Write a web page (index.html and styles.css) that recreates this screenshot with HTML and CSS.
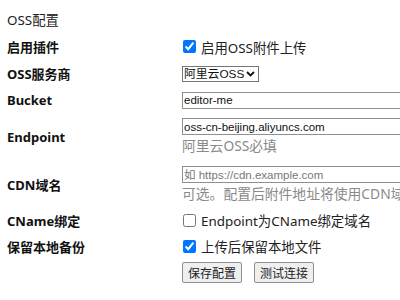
FILE: index.html
```html
<!DOCTYPE html>
<html lang="zh-CN">
<head>
<meta charset="utf-8">
<link rel="stylesheet" href="styles.css">
</head>
<body>
<div class="page">
  <div class="title">OSS配置</div>
  <div class="form">
    <div class="label">启用插件</div>
    <div class="ctl"><label class="chk"><input type="checkbox" checked> 启用OSS附件上传</label></div>

    <div class="label">OSS服务商</div>
    <div class="ctl"><span class="selwrap"><select class="sel"><option>阿里云OSS</option></select><svg class="chev" width="9" height="6" viewBox="0 0 9 6"><path d="M1 1 L4.5 4.5 L8 1" fill="none" stroke="#111" stroke-width="1.8"/></svg></span></div>

    <div class="label">Bucket</div>
    <div class="ctl"><input class="txt" type="text" value="editor-me"></div>

    <div class="label">Endpoint</div>
    <div class="ctl stack"><input class="txt" type="text" value="oss-cn-beijing.aliyuncs.com"><div class="hint">阿里云OSS必填</div></div>

    <div class="label">CDN域名</div>
    <div class="ctl stack"><input class="txt" type="text" placeholder="如 https://cdn.example.com"><div class="hint">可选。配置后附件地址将使用CDN域名</div></div>

    <div class="label">CName绑定</div>
    <div class="ctl"><label class="chk"><input type="checkbox"> Endpoint为CName绑定域名</label></div>

    <div class="label">保留本地备份</div>
    <div class="ctl"><label class="chk"><input type="checkbox" checked> 上传后保留本地文件</label></div>

    <div class="label"></div>
    <div class="ctl btns"><button class="btn">保存配置</button><button class="btn">测试连接</button></div>
  </div>
</div>
</body>
</html>
```
FILE: styles.css
```css
html, body {
  margin: 0;
  padding: 0;
  background: #fff;
  overflow: hidden;
}
.page {
  padding: 10px 0 0 7px;
  font-family: "Noto Sans", "Noto Sans CJK SC", sans-serif;
  font-size: 13.4px;
  color: #222;
  white-space: nowrap;
}
.title {
  height: 20px;
  line-height: 20px;
}
.form {
  display: grid;
  grid-template-columns: 175px 300px;
  grid-template-rows: 27px 27px 26px 48px 46px 26px 26px 26px;
  margin-top: 3px;
  align-items: center;
}
.label {
  font-weight: bold;
  font-size: 13px;
  color: #111;
}
.ctl {
  display: flex;
  align-items: center;
}
.stack {
  flex-direction: column;
  align-items: flex-start;
  justify-content: flex-start;
  align-self: start;
  padding-top: 5px;
}
.chk {
  display: flex;
  align-items: center;
  gap: 5px;
  color: #222;
}
.chk input {
  margin: 0 0 0 1px;
  width: 13px;
  height: 13px;
}
.selwrap {
  position: relative;
  display: inline-block;
  height: 16px;
}
.sel {
  appearance: none;
  -webkit-appearance: none;
  box-sizing: border-box;
  width: 77px;
  height: 16px;
  font-family: "Liberation Sans", "Noto Sans CJK SC", sans-serif;
  font-size: 11.8px;
  line-height: 14px;
  padding: 0 0 0 1px;
  margin: 0;
  border: 1px solid #767676;
  border-radius: 0;
  background: #fff;
  color: #111;
  vertical-align: top;
}
.chev {
  position: absolute;
  right: 4px;
  top: 5px;
  pointer-events: none;
}
.txt {
  box-sizing: border-box;
  width: 300px;
  height: 17px;
  margin: 0;
  padding: 0 1px;
  font-family: "Liberation Sans", "Noto Sans CJK SC", sans-serif;
  font-size: 11.5px;
  color: #111;
  border: 1px solid #8f8f8f;
  border-radius: 0;
}
.txt::placeholder {
  color: #777;
}
.hint {
  color: #8a8a8a;
  font-size: 13.8px;
  line-height: 20px;
  margin-top: 1px;
}
.btns {
  gap: 12px;
}
.btn {
  font-family: "Noto Sans CJK SC", sans-serif;
  font-size: 12px;
  height: 21px;
  padding: 0 5px;
  background: #efefef;
  border: 1px solid #8f8f8f;
  border-radius: 2px;
  color: #222;
}
```
